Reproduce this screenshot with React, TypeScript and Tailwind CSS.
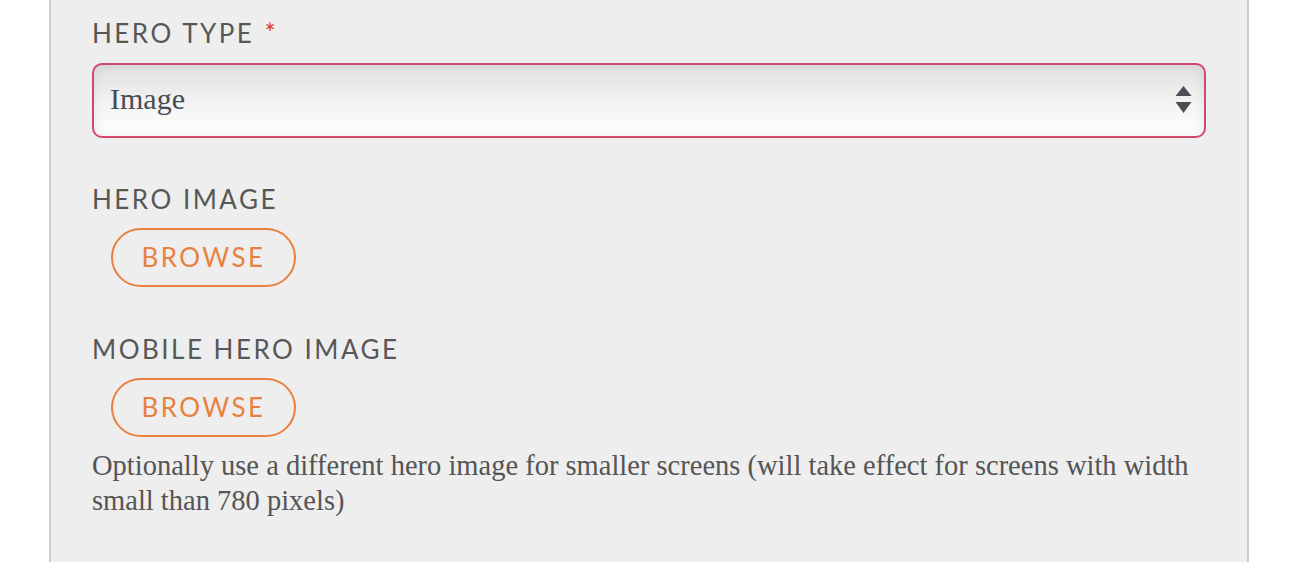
function FieldLabel({ text, required }: { text: string; required?: boolean }) {
  return (
    <div className="font-['Lato',sans-serif] text-[26px] leading-[32px] tracking-[2.5px] text-[#575757]">
      {text}
      {required && <span className="ml-[10px] text-[#e0352b]">*</span>}
    </div>
  );
}

function BrowseButton() {
  return (
    <button className="ml-[19px] h-[59px] w-[185px] rounded-full border-2 border-[#e8803f] font-['Lato',sans-serif] text-[26px] tracking-[2.4px] text-[#e8803f]">
      BROWSE
    </button>
  );
}

export default function App() {
  return (
    <div className="min-h-[562px] bg-white">
      <div className="ml-[49px] min-h-[562px] w-[1200px] border-x-2 border-[#cccccc] bg-[#eeeeee] px-[41px] pt-[17px]">
        <FieldLabel text="HERO TYPE" required />
        <div className="relative mt-[14px] flex h-[75px] items-center rounded-[10px] border-2 border-[#d2486c] bg-linear-to-b from-[#e0e0e0] via-[#f2f2f2] to-white px-[16px] pb-[4px] shadow-[inset_0_0_12px_rgba(0,0,0,0.08)]">
          <span className="font-['Liberation_Serif',serif] text-[30px] text-[#474c52]">
            Image
          </span>
          <svg
            className="absolute right-[12px] top-[21px]"
            width="17"
            height="28"
            viewBox="0 0 17 28"
          >
            <path d="M8.5 0 L16.5 10 L0.5 10 Z" fill="#4a4f55" />
            <path d="M0.5 16 L16.5 16 L8.5 27 Z" fill="#4a4f55" />
          </svg>
        </div>

        <div className="mt-[45px]">
          <FieldLabel text="HERO IMAGE" />
        </div>
        <div className="mt-[13px]">
          <BrowseButton />
        </div>

        <div className="mt-[46px]">
          <FieldLabel text="MOBILE HERO IMAGE" />
        </div>
        <div className="mt-[13px]">
          <BrowseButton />
        </div>
        <p className="mt-[11px] font-['Liberation_Serif',serif] text-[28.5px] leading-[35px] text-[#555555]">
          Optionally use a different hero image for smaller screens (will take
          effect for screens with width small than 780 pixels)
        </p>
      </div>
    </div>
  );
}
